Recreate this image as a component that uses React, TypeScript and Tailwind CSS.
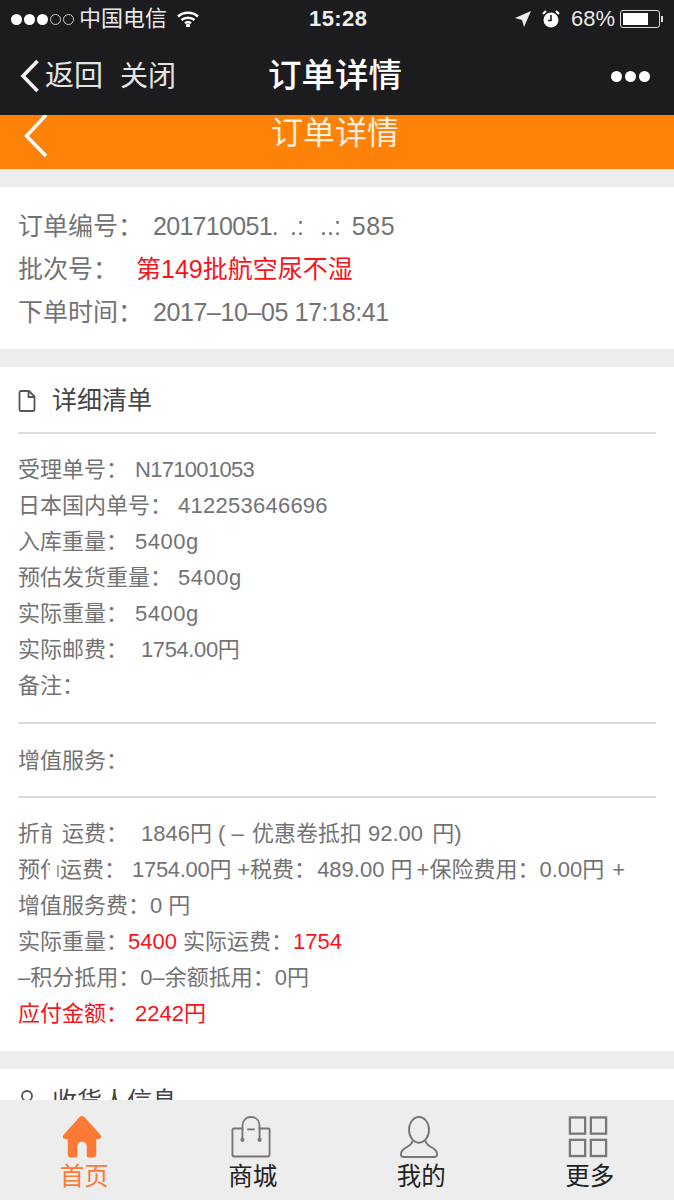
const font = "font-['Liberation_Sans','Noto_Sans_CJK_SC',sans-serif]";

function StatusBar() {
  return (
    <div className="relative flex h-[38px] items-center px-[11px] text-[22px] text-[#e8e8e8]">
      <div className="flex items-center gap-[2px]">
        {[0, 1, 2].map((i) => (
          <span key={i} className="h-[11px] w-[11px] rounded-full bg-white" />
        ))}
        {[0, 1].map((i) => (
          <span key={i} className="h-[11px] w-[11px] rounded-full border border-[#ccc]" />
        ))}
      </div>
      <span className="ml-[5px] leading-none">中国电信</span>
      <svg className="ml-[10px]" width="22" height="16" viewBox="0 0 22 16" fill="none" stroke="#fff" strokeWidth="2.4">
        <path d="M1 5.500c5.500-5 14.500-5 20 0" />
        <path d="M4.500 9c3.500-3 9.500-3 13 0" />
        <path d="M8 12.300c1.700-1.400 4.300-1.400 6 0" />
        <circle cx="11" cy="14.500" r="0.800" fill="#fff" />
      </svg>
      <span className="absolute left-[309px] top-[6px] text-[22px] leading-[26px] font-bold tracking-[0.4px] text-[#eee]">15:28</span>
      <div className="ml-auto flex items-center">
        <svg width="16" height="16" viewBox="0 0 16 16" fill="#eee">
          <path d="M16 0 0 7l7 2 2 7z" />
        </svg>
        <svg className="ml-[11px]" width="18" height="18" viewBox="0 0 18 18">
          <circle cx="9" cy="10" r="7.500" fill="#fff" />
          <path d="M9 5v5.500h-3" fill="none" stroke="#1c1c1f" strokeWidth="1.600" />
          <path d="M1 4 4 1M14 1l3 3" stroke="#fff" strokeWidth="2.200" />
        </svg>
        <span className="ml-[11px] leading-none">68%</span>
        <div className="ml-[5px] flex h-[18px] w-[40px] items-center rounded-[3px] border border-[#ddd] p-[2px]">
          <span className="h-full w-[25px] bg-white" />
        </div>
        <span className="ml-[1px] h-[6px] w-[2px] bg-[#ddd]" />
      </div>
    </div>
  );
}

function NavBar() {
  return (
    <div className="relative flex h-[77px] items-center pl-[20px] pr-[24px] text-white">
      <svg width="20" height="34" viewBox="0 0 20 34" fill="none" stroke="#f4f4f4" strokeWidth="3.600" className="mt-[-1px]">
        <path d="M17.500 2 3 17l14.500 15" />
      </svg>
      <span className="ml-[5px] text-[29px] leading-none text-[#e4e4e4]">返回</span>
      <span className="ml-[17px] text-[28px] leading-none text-[#e4e4e4]">关闭</span>
      <span className="absolute left-[268px] top-[18px] text-[33.500px] leading-[40px] font-medium">订单详情</span>
      <div className="ml-auto flex gap-[3px]">
        {[0, 1, 2].map((i) => (
          <span key={i} className="h-[11px] w-[11px] rounded-full bg-white" />
        ))}
      </div>
    </div>
  );
}

function PageHeader() {
  return (
    <div className="relative flex h-[54px] shrink-0 justify-center bg-[#ff8208] pr-[4px] shadow-[0_1px_0_#ffe3c4]">
      <svg className="absolute left-[24px] top-0" width="24" height="42" viewBox="0 0 24 42" fill="none" stroke="#fff" strokeWidth="3.500">
        <path d="M22 0 2.500 21 22 41" />
      </svg>
      <span className="mt-[-2px] text-[32px] leading-[40px] text-[#fdf0e0]">订单详情</span>
    </div>
  );
}

function Gap() {
  return <div className="h-[18px] shrink-0 bg-[#ededed]" />;
}

function Divider() {
  return <div className="h-[2px] bg-[#dcdcdc]" />;
}

function Row({ children }: { children: React.ReactNode }) {
  return <p className="h-[36px] whitespace-nowrap text-[22px] leading-[36px] text-[#737373]">{children}</p>;
}

function Red({ children }: { children: React.ReactNode }) {
  return <span className="text-[#f5141c]">{children}</span>;
}

function OrderInfo() {
  return (
    <section className="h-[162px] shrink-0 bg-white pl-[18px] pt-[18px] text-[25px] leading-[43px] text-[#737373]">
      <p className="flex whitespace-pre">
        <span className="w-[135px]">订单编号：</span>
        <span className="tracking-[-0.7px]">201710051.</span>
        <span className="ml-[12px]">.:</span>
        <span className="ml-[16px]">..:</span>
        <span className="ml-[11px] tracking-[0.5px]">585</span>
      </p>
      <p className="flex">
        <span className="w-[118px]">批次号：</span>
        <span className="text-[#f5141c]">第149批航空尿不湿</span>
      </p>
      <p className="flex whitespace-pre">
        <span className="w-[135px]">下单时间：</span>
        <span className="tracking-[-0.4px]">2017–10–05 17:18:41</span>
      </p>
    </section>
  );
}

function DetailList() {
  return (
    <section className="h-[684px] shrink-0 bg-white px-[18px]">
      <div className="flex h-[65px] items-center">
        <svg width="18" height="22" viewBox="0 0 18 22" fill="none" stroke="#555" strokeWidth="1.800" className="mt-[2px]">
          <path d="M1.500 2.500a1.500 1.500 0 0 1 1.500-1.500h8l5.500 5.500v13a1.500 1.500 0 0 1-1.500 1.500h-12a1.500 1.500 0 0 1-1.500-1.500z" />
          <path d="M10.500 1v6h6" />
        </svg>
        <span className="ml-[16px] mt-[2px] text-[25px] leading-none text-[#444]">详细清单</span>
      </div>
      <Divider />
      <div className="pt-[18px]">
        <Row>受理单号：<span className="ml-[7px] tracking-[-0.7px]">N171001053</span></Row>
        <Row>日本国内单号：<span className="ml-[6px] tracking-[0.25px]">412253646696</span></Row>
        <Row>入库重量：<span className="ml-[7px] tracking-[0.5px]">5400g</span></Row>
        <Row>预估发货重量：<span className="ml-[6px] tracking-[0.5px]">5400g</span></Row>
        <Row>实际重量：<span className="ml-[7px] tracking-[0.5px]">5400g</span></Row>
        <Row>实际邮费：<span className="ml-[13px] tracking-[-0.4px]">1754.00円</span></Row>
        <Row>备注：</Row>
      </div>
      <div className="mt-[18px]">
        <Divider />
      </div>
      <div className="flex h-[72px] items-center">
        <span className="text-[22px] text-[#737373]">增值服务：</span>
      </div>
      <Divider />
      <div className="pt-[18px]">
        <Row>
          折
          <span className="inline-block w-[12px] overflow-hidden align-bottom">前</span>
          <span className="inline-block w-[10px]" />
          运费：<span className="ml-[13px]">1846円 ( – <span className="ml-[2px]">优惠卷抵扣</span> 92.00 <span className="ml-[3px]">円)</span></span>
        </Row>
        <Row>
          预
          <span className="inline-block w-[10px] overflow-hidden align-bottom">付</span>
          <span className="inline-block w-[7px]" />
          <span className="inline-block h-[12px] w-[2px] bg-[#aaa]" />
          <span className="inline-block w-[1px]" />
          运费：<span className="ml-[6px] tracking-[-0.3px]">1754.00円</span> +税费：<span className="ml-[1px]">489.00 円</span>
          <span className="ml-[4px]">+保险费用：</span>0.00円 <span className="ml-[2px]">+</span>
        </Row>
        <Row>增值服务费：0 円</Row>
        <Row>
          实际重量：<Red>5400</Red> 实际运费：<Red>1754</Red>
        </Row>
        <Row>–积分抵用：0–余额抵用：0円</Row>
        <Row>
          <Red>应付金额：<span className="ml-[7px]">2242円</span></Red>
        </Row>
      </div>
    </section>
  );
}

function ReceiverInfo() {
  return (
    <section className="flex h-[80px] shrink-0 items-start bg-white px-[18px] pt-[18px]">
      <svg width="18" height="24" viewBox="0 0 18 24" fill="none" stroke="#555" strokeWidth="1.800" className="mt-[1px]">
        <circle cx="9" cy="8" r="5" />
      </svg>
      <span className="ml-[16px] text-[25px] leading-[28px] text-[#444]">收货人信息</span>
    </section>
  );
}

function TabIcon({ name }: { name: string }) {
  if (name === "home") {
    return (
      <svg width="40" height="42" viewBox="0 0 42 44" fill="#fc7936" className="mr-[4px]">
        <path d="M21 0c1 0 2 .500 3 1.500l16 18c2 2.500 1.500 4.500-1.500 4.500h-2.500v16c0 2-1.500 3.500-3.500 3.500h-5c-1 0-1.500-.500-1.500-1.500v-10c0-3-2-5-5-5s-5 2-5 5v10c0 1-.500 1.500-1.500 1.500h-5c-2 0-3.500-1.500-3.500-3.500v-16h-2.500c-3 0-3.500-2-1.500-4.500l16-18c1-1 2-1.500 3-1.500z" />
      </svg>
    );
  }
  if (name === "shop") {
    return (
      <svg width="40" height="42" viewBox="0 0 42 44" fill="none" stroke="#777" strokeWidth="2" className="mr-[4px]">
        <path d="M13 13H3a1.500 1.500 0 0 0-1.500 1.500v26a2 2 0 0 0 2 2h35a2 2 0 0 0 2-2v-26a1.500 1.500 0 0 0-1.500-1.500h-10" />
        <path d="M12 25V11c0-6 3.500-10 9-10s9 4 9 10v14" />
        <path d="M17 14h8" />
        <circle cx="12" cy="25" r="1.200" fill="#777" />
        <circle cx="30" cy="25" r="1.200" fill="#777" />
      </svg>
    );
  }
  if (name === "user") {
    return (
      <svg width="40" height="42" viewBox="0 0 42 44" fill="none" stroke="#777" strokeWidth="2" className="mr-[4px]">
        <ellipse cx="21" cy="14.500" rx="10.500" ry="13.500" />
        <path d="M14 26c0 3-2 4.500-5 6-4 2-7 4-7 8 0 2 1 3 3 3h32c2 0 3-1 3-3 0-4-3-6-7-8-3-1.500-5-3-5-6" />
      </svg>
    );
  }
  return (
    <svg width="40" height="42" viewBox="0 0 42 44" fill="none" stroke="#777" strokeWidth="2.400" className="mr-[4px]">
      <rect x="2" y="1.500" width="16" height="17" />
      <rect x="24" y="1.500" width="16" height="17" />
      <rect x="2" y="25" width="16" height="17" />
      <rect x="24" y="25" width="16" height="17" />
    </svg>
  );
}

const tabs = [
  { icon: "home", label: "首页", active: true },
  { icon: "shop", label: "商城", active: false },
  { icon: "user", label: "我的", active: false },
  { icon: "more", label: "更多", active: false },
];

function TabBar() {
  return (
    <nav className="grid h-[100px] shrink-0 grid-cols-4 bg-[#ededed] pt-[16px]">
      {tabs.map((tab) => (
        <div key={tab.label} className="flex flex-col items-center">
          <TabIcon name={tab.icon} />
          <span className={`mt-[2px] text-[24.500px] leading-[34px] ${tab.active ? "text-[#fc7936]" : "text-[#222]"}`}>
            {tab.label}
          </span>
        </div>
      ))}
    </nav>
  );
}

export default function App() {
  return (
    <div className={`${font} flex h-[1200px] w-[674px] flex-col overflow-hidden bg-white`}>
      <header className="h-[115px] shrink-0 bg-[#1c1c1f]">
        <StatusBar />
        <NavBar />
      </header>
      <PageHeader />
      <main className="flex min-h-0 flex-1 flex-col overflow-hidden">
        <Gap />
        <OrderInfo />
        <Gap />
        <DetailList />
        <Gap />
        <ReceiverInfo />
      </main>
      <TabBar />
    </div>
  );
}
